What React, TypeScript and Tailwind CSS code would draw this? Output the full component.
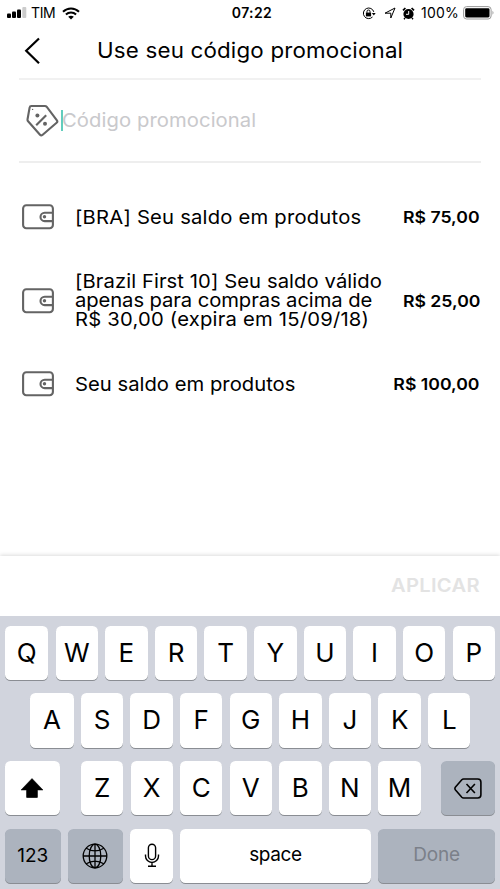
import { type ReactNode } from 'react';
import clsx from 'clsx';

const balances = [
  { lines: ['[BRA] Seu saldo em produtos'], tracking: ['tracking-[0.2px]'], amount: 'R$ 75,00' },
  {
    lines: ['[Brazil First 10] Seu saldo válido', 'apenas para compras acima de', 'R$ 30,00 (expira em 15/09/18)'],
    tracking: ['tracking-[0.08px]', 'tracking-[-0.08px]', 'tracking-[0.2px]'],
    amount: 'R$ 25,00',
  },
  { lines: ['Seu saldo em produtos'], tracking: ['tracking-[0.02px]'], amount: 'R$ 100,00' },
];

function StatusBar() {
  return (
    <div className="grid h-[26px] grid-cols-[1fr_auto_1fr] items-center pr-[5px] pl-[7px] leading-none">
      <div className="flex items-center">
        <svg width="20" height="12" viewBox="0 0 20 12">
          <rect x="0" y="6.5" width="4" height="4.5" rx="1" />
          <rect x="5" y="4.5" width="4" height="6.5" rx="1" />
          <rect x="10" y="2.5" width="4" height="8.5" rx="1" />
          <rect x="15.3" y="0" width="4" height="11" rx="1" fill="#ccc" />
        </svg>
        <span className="ml-[4px] text-[14px] tracking-[-0.4px]">TIM</span>
        <svg className="ml-[7px]" width="18" height="13" viewBox="0 0 18 13" fill="none" stroke="black" strokeWidth="2">
          <path d="M1 4.7C5.5.4 12.5.4 17 4.7" />
          <path d="M3.9 7.6c2.9-2.7 7.3-2.7 10.2 0" />
          <path d="M6.2 9.7c1.6-1.4 4-1.4 5.6 0L9 12.6z" fill="black" stroke="none" />
        </svg>
      </div>
      <span className="ml-[2px] text-[14px] font-semibold tracking-[0.4px]">07:22</span>
      <div className="flex items-center justify-end">
        <svg width="14" height="13" viewBox="0 0 14 13" fill="none" stroke="black">
          <path d="M11.8 4.9A5.3 5.3 0 1 0 10.5 10" />
          <path d="M9.9 6h3.8l-1.9 2.5z" fill="black" stroke="none" />
          <rect x="3.9" y="5.6" width="5.2" height="3.8" fill="black" stroke="none" />
          <path d="M5 5.8V4.5a1.5 1.5 0 0 1 3 0v1.3" />
        </svg>
        <svg className="ml-[8px]" width="12" height="12" viewBox="0 0 12 12" fill="none" stroke="black">
          <path d="M1 6.2 11 1 6.8 11V6.2z" strokeLinejoin="round" />
        </svg>
        <svg className="ml-[6px]" width="13" height="13" viewBox="0 0 13 13">
          <circle cx="6.5" cy="7" r="5.1" />
          <path d="M1 3.4 3.4 1M12 3.4 9.6 1" stroke="black" strokeWidth="1.7" />
          <path d="m3 11-1 1.3M10 11l1 1.3" stroke="black" strokeWidth="1.4" />
          <path d="M6.7 4v3.3H4" fill="none" stroke="white" />
        </svg>
        <span className="ml-[6px] text-[14px] tracking-[0.2px]">100%</span>
        <svg className="ml-[4px]" width="32" height="14" viewBox="0 0 32 14">
          <rect x="0.6" y="0.6" width="27.5" height="12.4" rx="3" fill="none" stroke="#999" />
          <rect x="2.2" y="2.2" width="24.3" height="9.2" rx="1.3" />
          <path d="M29.5 4.8q2 2 0 4z" fill="#999" />
        </svg>
      </div>
    </div>
  );
}

function WalletIcon() {
  return (
    <svg className="shrink-0" width="32" height="26" viewBox="0 0 32 26" fill="none" stroke="#646464" strokeWidth="2.1">
      <rect x="1.1" y="1.3" width="29.8" height="23" rx="3.2" />
      <path d="M31 8.7h-8.3a4.2 4.2 0 0 0 0 8.4H31" />
      <circle cx="22.5" cy="12.8" r="1.7" fill="#646464" stroke="none" />
    </svg>
  );
}

function TagIcon() {
  return (
    <svg className="shrink-0" width="34" height="34" viewBox="0 0 34 34" fill="none" stroke="#646464" strokeWidth="2.1">
      <path d="M5.4 2H18.8q1.3 0 2 .9l10.1 13.4q1 1.3-.3 2.4L16.4 31q-1.3 1-2.4-.3L2.1 17.3q-.7-.8-.6-1.8L3.6 3.6Q3.9 2 5.4 2z" strokeLinejoin="round" />
      <path d="m10.2 21.3 10-10" />
      <circle cx="11.4" cy="11.4" r="2" fill="#646464" stroke="none" />
      <circle cx="19" cy="19.7" r="2" fill="#646464" stroke="none" />
      <circle cx="6.6" cy="5.4" r="0.7" fill="#646464" stroke="none" />
    </svg>
  );
}

function Key({ children, className = 'flex-1', dark = false }: { children: ReactNode; className?: string; dark?: boolean }) {
  return (
    <div
      className={clsx(
        'flex h-[54.5px] items-center justify-center rounded-[5.5px] shadow-[0_1px_0_#8a8d93]',
        dark ? 'bg-[#acb3be]' : 'bg-white',
        className,
      )}
    >
      {children}
    </div>
  );
}

function Letters({ keys, wideFirst = false }: { keys: string; wideFirst?: boolean }) {
  return keys.split('').map((letter, i) => (
    <Key key={letter} className={wideFirst && i === 0 ? 'w-[43.4px]' : 'flex-1'}>
      <span className="text-[26px] leading-none">{letter}</span>
    </Key>
  ));
}

function Keyboard() {
  return (
    <div className="flex h-[273px] flex-col gap-[13.2px] bg-[#d1d4dd] px-[5px] pt-[9.5px]">
      <div className="flex gap-[7.2px]">
        <Letters keys="QWERTYUIOP" wideFirst />
      </div>
      <div className="flex gap-[7.2px] pr-[24.5px] pl-[25.2px]">
        <Letters keys="ASDFGHJKL" wideFirst />
      </div>
      <div className="flex">
        <Key className="w-[54.5px]">
          <svg width="24" height="20" viewBox="0 0 24 20">
            <path d="M12 .5 23 12h-5.5v7q0 .8-.8.8H7.3q-.8 0-.8-.8v-7H1z" strokeLinejoin="round" stroke="black" strokeWidth="0.5" />
          </svg>
        </Key>
        <div className="mr-auto ml-[21.5px] flex w-[339.6px] gap-[7.2px]">
          <Letters keys="ZXCVBNM" />
        </div>
        <Key dark className="w-[54px]">
          <svg width="28" height="21" viewBox="0 0 28 21" fill="none" stroke="black" strokeWidth="1.6">
            <path d="M9.5 1h14.2a3.2 3.2 0 0 1 3.2 3.2v12.6a3.2 3.2 0 0 1-3.2 3.2H9.5q-1 0-1.7-.7L1.5 12q-1.2-1.5 0-3L7.8 1.7Q8.5 1 9.5 1z" />
            <path d="m12.5 6 8.4 9M20.9 6l-8.4 9" />
          </svg>
        </Key>
      </div>
      <div className="flex gap-[7.3px]">
        <Key dark className="w-[55.5px]">
          <span className="text-[19px] leading-none">123</span>
        </Key>
        <Key dark className="w-[55.3px]">
          <svg width="26" height="26" viewBox="0 0 26 26" fill="none" stroke="black" strokeWidth="1.3">
            <circle cx="13" cy="13" r="11.8" />
            <ellipse cx="13" cy="13" rx="5.8" ry="11.8" />
            <path d="M13 1v24M1 13h24M4.2 5.2q8.8 5.4 17.6 0M4.2 20.8q8.8-5.4 17.6 0" />
          </svg>
        </Key>
        <Key className="w-[42.5px]">
          <svg width="16" height="25" viewBox="0 0 16 25" fill="none" stroke="black" strokeWidth="1.4">
            <rect x="4.4" y="1.2" width="7.2" height="15.4" rx="3.6" />
            <path d="M1.5 11.5V13a6.5 6.5 0 0 0 13 0v-1.5M8 19.5v3.6M4 23.3h8" />
          </svg>
        </Key>
        <Key>
          <span className="mb-[2px] text-[19px] leading-none tracking-[-0.4px]">space</span>
        </Key>
        <Key dark className="w-[117px]">
          <span className="mb-[2px] text-[19px] leading-none tracking-[-0.2px] text-[#7b8089]">Done</span>
        </Key>
      </div>
    </div>
  );
}

export default function App() {
  return (
    <div className="flex h-[889px] w-[500px] flex-col overflow-hidden bg-white font-['Inter',sans-serif] text-black">
      <StatusBar />
      <header className="mx-[19px] grid h-[54px] grid-cols-[78px_1fr] items-center border-b-2 border-[#f1f1f1] pb-[3px]">
        <svg className="ml-[5px]" width="17" height="28" viewBox="0 0 17 28" fill="none" stroke="black" strokeWidth="2.2">
          <path d="M15 1.5 2.2 13.8 15 26.3" />
        </svg>
        <h1 className="origin-left scale-x-[1.063] text-[21px] leading-none tracking-[0.18px] whitespace-nowrap">
          Use seu código promocional
        </h1>
      </header>
      <div className="mx-[19px] flex h-[83px] items-center border-b-2 border-[#eeeeee] pl-[7px]">
        <TagIcon />
        <div className="ml-[0.5px] h-[21px] w-[2px] bg-[#62cdbd]" />
        <span className="-ml-[1px] mb-[1px] origin-left scale-x-[1.064] text-[19px] leading-none tracking-[0.08px] text-[#c9c9cc]">
          Código promocional
        </span>
      </div>
      <div className="flex flex-1 flex-col pt-[12.5px]">
        {balances.map((item) => (
          <div key={item.amount} className="flex h-[83.5px] items-center pr-[20px] pl-[22px]">
            <WalletIcon />
            <div className="ml-[20.5px] flex-1 origin-left scale-x-[1.064] text-[19px] leading-[19.3px] whitespace-nowrap">
              {item.lines.map((line, i) => (
                <div key={line} className={item.tracking[i]}>
                  {line}
                </div>
              ))}
            </div>
            <span className="origin-right scale-x-[1.07] text-[16.5px] leading-none font-semibold">{item.amount}</span>
          </div>
        ))}
      </div>
      <footer className="flex h-[60.5px] items-center justify-end pr-[20px] shadow-[0_-1px_4px_rgba(0,0,0,0.14)]">
        <span className="mb-[1px] origin-right scale-x-[1.06] text-[19px] leading-none font-semibold tracking-[0.3px] text-[#e3e3e3]">
          APLICAR
        </span>
      </footer>
      <Keyboard />
    </div>
  );
}
